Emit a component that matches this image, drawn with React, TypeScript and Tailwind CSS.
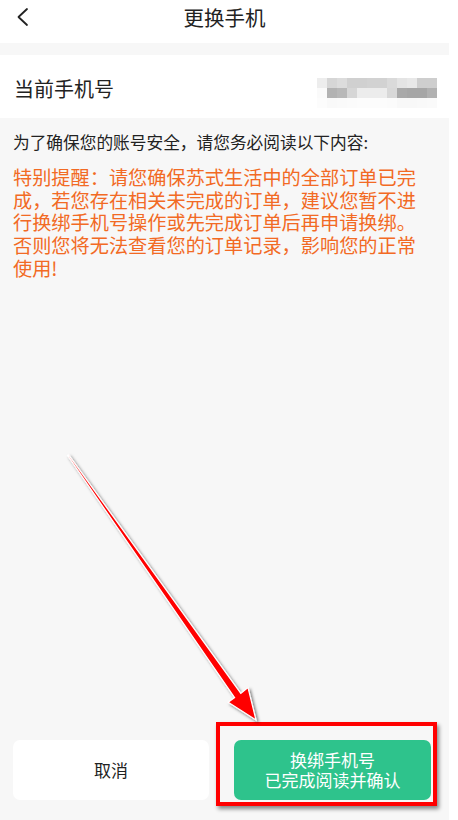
import React from "react";

const row1 = [
  "bg-[#ededed]",
  "bg-[#d6d6d6]",
  "bg-[#dcdcdc]",
  "bg-[#d0d0d0]",
  "bg-[#d0d0d0]",
  "bg-[#d2d2d2]",
  "bg-[#d2d2d2]",
  "bg-[#dadada]",
  "bg-[#e4e4e4]",
  "bg-[#e8e8e8]",
  "bg-[#cecece]",
  "bg-[#cecece]",
];
const row2 = [
  "bg-[#fafafa]",
  "bg-[#b2b2b2]",
  "bg-[#b8b8b8]",
  "bg-[#d6d6d6]",
  "bg-[#ececec]",
  "bg-[#ececec]",
  "bg-[#ececec]",
  "bg-[#d8d8d8]",
  "bg-[#a9a9a9]",
  "bg-[#a6a6a6]",
  "bg-[#a6a6a6]",
  "bg-[#b1b1b1]",
];
const row3 = [
  "bg-[#fcfcfc]",
  "bg-[#f9f9f9]",
  "bg-[#fafafa]",
  "bg-[#fbfbfb]",
  "bg-[#fcfcfc]",
  "bg-[#fcfcfc]",
  "bg-[#fcfcfc]",
  "bg-[#fbfbfb]",
  "bg-[#f8f8f8]",
  "bg-[#f8f8f8]",
  "bg-[#f9f9f9]",
  "bg-[#fafafa]",
];

function Blur() {
  return (
    <div className="flex flex-col">
      {[row1, row2, row3].map((r, i) => (
        <div key={i} className="flex">
          {r.map((c, j) => (
            <div key={j} className={`h-[10px] w-[10px] ${c}`} />
          ))}
        </div>
      ))}
    </div>
  );
}

const warning = [
  "特别提醒：请您确保苏式生活中的全部订单已完",
  "成，若您存在相关未完成的订单，建议您暂不进",
  "行换绑手机号操作或先完成订单后再申请换绑。",
  "否则您将无法查看您的订单记录，影响您的正常",
  "使用!",
];

export default function App() {
  return (
    <div
      className="relative h-[820px] w-[458px] overflow-hidden bg-white"
      style={{ fontFamily: '"Noto Sans CJK SC", "Noto Sans", sans-serif' }}
    >
      <div className="flex h-full w-[449px] flex-col bg-[#f7f7f7]">
        {/* header */}
        <div className="relative flex h-[43px] items-center justify-center bg-white">
          <svg
            className="absolute left-[15px] top-[7px]"
            width="16"
            height="20"
            viewBox="0 0 16 20"
            fill="none"
          >
            <path
              d="M12 2 L3.5 10 L12 18"
              stroke="#222"
              strokeWidth="1.8"
              strokeLinecap="round"
              strokeLinejoin="round"
            />
          </svg>
          <span className="-mt-[9px] text-[20.5px] leading-none text-[#222]">更换手机</span>
        </div>
        <div className="h-[12px]" />
        {/* current phone row */}
        <div className="flex h-[63px] items-center justify-between bg-white pl-[14px] pr-[12px]">
          <span className="mt-[4px] text-[20px] text-[#222]">当前手机号</span>
          <div className="mt-[12px]">
            <Blur />
          </div>
        </div>
        {/* notice */}
        <div className="px-[13px] pt-[12px]">
          <p className="text-[16.7px] leading-[24px] text-[#222]">
            为了确保您的账号安全，请您务必阅读以下内容:
          </p>
          <div className="mt-[12px] flex flex-col text-[19.2px] leading-[22.7px] text-[#f26a24]">
            {warning.map((l, i) => (
              <span key={i} className="whitespace-nowrap">
                {l}
              </span>
            ))}
          </div>
        </div>
        <div className="flex-1" />
        {/* buttons */}
        <div className="flex gap-[25px] pb-[20px] pl-[13px]">
          <div className="flex h-[60px] w-[196px] items-center justify-center rounded-[7px] bg-white text-[17px] text-[#222]">
            取消
          </div>
          <div className="flex h-[60px] w-[197px] flex-col items-center justify-center rounded-[7px] bg-[#2ec38c] text-[17px] leading-[20px] text-white">
            <span>换绑手机号</span>
            <span>已完成阅读并确认</span>
          </div>
        </div>
      </div>

      {/* annotation: red box */}
      <div className="pointer-events-none absolute left-[216px] top-[722px] h-[84px] w-[221px] border-[4px] border-[#ff0000] shadow-[2px_3px_4px_rgba(0,0,0,0.45)]" />

      {/* annotation: arrow */}
      <svg
        className="pointer-events-none absolute left-0 top-0"
        width="458"
        height="820"
        viewBox="0 0 458 820"
      >
        <defs>
          <filter id="sh" x="-20%" y="-20%" width="140%" height="140%">
            <feDropShadow dx="2" dy="2" stdDeviation="1.6" floodColor="#000" floodOpacity="0.5" />
          </filter>
        </defs>
        <polygon
          points="68.5,454.6 67.5,455.4 234.6,697.6 228.2,702.2 256,720 248,687.5 240.8,693.4"
          fill="#ff0000"
          stroke="#ffffff"
          strokeWidth="1.2"
          strokeLinejoin="miter"
          filter="url(#sh)"
        />
      </svg>
    </div>
  );
}
